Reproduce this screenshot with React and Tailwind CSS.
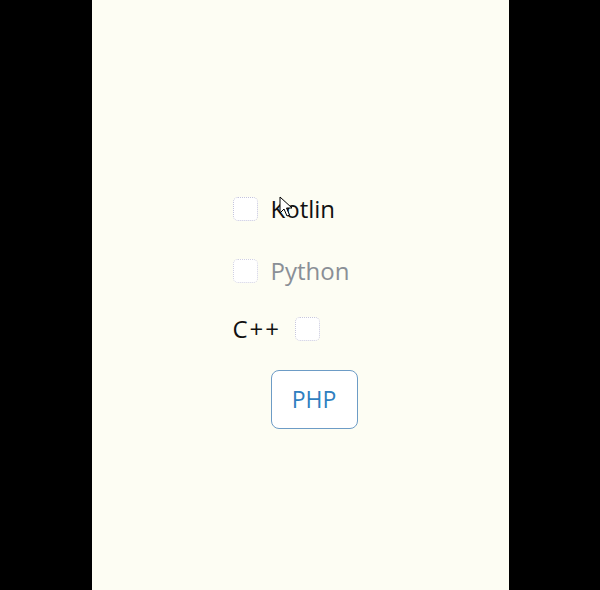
export default function App() {
    const font = { fontFamily: '"Open Sans", "Noto Sans", sans-serif' }

    return (
        <div className="w-[600px] h-[590px] bg-black flex justify-center" style={font}>
            <div className="w-[417px] h-full bg-[#fdfdf3] pl-[141px] pt-[196px] flex flex-col relative">
                {/* Kotlin */}
                <div className="flex items-center h-[25px] gap-[13px]">
                    <span className="w-[25px] h-[24px] rounded-[5px] border border-dotted border-[#c4c4dc] bg-white" />
                    <span className="text-[24px] text-[#111] leading-none">Kotlin</span>
                </div>

                {/* Python */}
                <div className="flex items-center h-[25px] gap-[13px] mt-[37px]">
                    <span className="w-[25px] h-[24px] rounded-[5px] border border-dotted border-[#d0d0e2] bg-white" />
                    <span className="text-[24px] text-[#8a8f96] leading-none">Python</span>
                </div>

                {/* C++ */}
                <div className="flex items-center h-[25px] gap-[14px] mt-[33px]">
                    <span className="text-[24px] text-[#111] leading-none tracking-[2px]">C++</span>
                    <span className="w-[25px] h-[24px] rounded-[5px] border border-dotted border-[#c8c8dc] bg-white" />
                </div>

                {/* PHP */}
                <button className="mt-[29px] ml-[38px] w-[87px] h-[59px] rounded-[8px] border border-[#6d9cc6] bg-white text-[23px] text-[#2f7fc0] flex items-center justify-center">
                    PHP
                </button>

                {/* pointer */}
                <svg
                    className="absolute left-[187px] top-[196px]"
                    width="14"
                    height="22"
                    viewBox="0 0 14 22"
                >
                    <path
                        d="M1 1 L1 17 L5 13 L8 20 L10.5 19 L7.5 12 L13 12 Z"
                        fill="#fff"
                        stroke="#000"
                        strokeWidth="1"
                        strokeLinejoin="round"
                    />
                </svg>
            </div>
        </div>
    )
}
